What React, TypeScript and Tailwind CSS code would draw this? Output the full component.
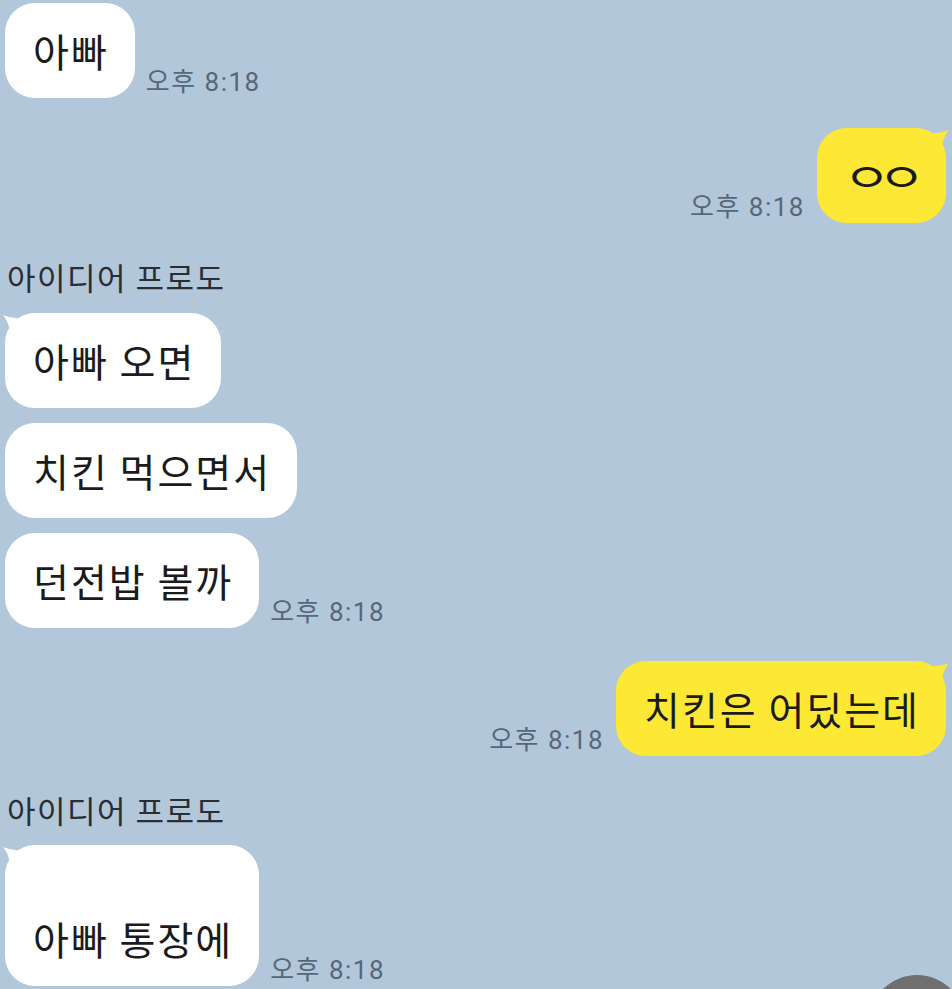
import React from 'react'

const font = { fontFamily: '"Noto Sans CJK KR", "Noto Sans", sans-serif' }

function Time() {
  return (
    <span
      className="mb-[3px] shrink-0 text-[26px] leading-none tracking-[1.5px] text-[#56677a]"
      style={{ fontFamily: 'Roboto, "Noto Sans CJK KR", sans-serif' }}
    >
      오후 8:18
    </span>
  )
}

function LeftTail() {
  return (
    <svg className="absolute -left-[3px] top-[1px] h-[22px] w-[24px]" viewBox="0 0 24 22">
      <path d="M1 1 C 6 3, 12 4, 22 5 L 22 22 L 8 22 C 8 14, 6 7, 1 1 Z" fill="#ffffff" />
    </svg>
  )
}

function RightTail() {
  return (
    <svg className="absolute -right-[4px] top-[1px] h-[22px] w-[24px]" viewBox="0 0 24 22">
      <path d="M23 1 C 18 3, 12 4, 2 5 L 2 22 L 16 22 C 16 14, 18 7, 23 1 Z" fill="#fde935" />
    </svg>
  )
}

function Left({ text, time, tail, lines = 1 }: { text: string; time?: boolean; tail?: boolean; lines?: number }) {
  return (
    <div className="flex items-end gap-[11px] pl-[5px]">
      <div className="relative">
        {tail && <LeftTail />}
        <div className="relative rounded-[30px] bg-white py-[24px] pl-[28px] pr-[26px] text-[39px] leading-[47px] tracking-[2px] text-[#1b1b1b]">
          {lines > 1 && <div className="h-[46px]" />}
          {text}
        </div>
      </div>
      {time && <Time />}
    </div>
  )
}

function Right({ children }: { children: React.ReactNode }) {
  return (
    <div className="flex items-end justify-end gap-[12px] pr-[6px]">
      <Time />
      <div className="relative">
        <RightTail />
        <div className="relative rounded-[30px] bg-[#fde935] py-[24px] pl-[28px] pr-[26px] text-[39px] leading-[47px] tracking-[2px] text-[#1b1b1b]">
          {children}
        </div>
      </div>
    </div>
  )
}

function Name() {
  return <div className="pl-[7px] text-[31px] leading-[36px] tracking-[1.5px] text-[#2a2e33]">아이디어 프로도</div>
}

export default function App() {
  return (
    <div className="relative h-[989px] w-[952px] overflow-hidden bg-[#b2c7d9]" style={font}>
      <div className="flex flex-col pt-[3px]">
        <Left text="아빠" time />
        <div className="mt-[30px]">
          <Right>
            <div className="flex h-[47px] w-[75px] items-center justify-center">
              <span className="mr-[10px] inline-block scale-x-[1.3] text-[40px] tracking-[-10px]">ㅇㅇ</span>
            </div>
          </Right>
        </div>
        <div className="mt-[36px]">
          <Name />
        </div>
        <div className="mt-[18px] flex flex-col gap-[15px]">
          <Left text="아빠 오면" tail />
          <Left text="치킨 먹으면서" />
          <Left text="던전밥 볼까" time />
        </div>
        <div className="mt-[33px]">
          <Right>치킨은 어딨는데</Right>
        </div>
        <div className="mt-[36px]">
          <Name />
        </div>
        <div className="mt-[17px]">
          <Left text="아빠 통장에" tail time lines={2} />
        </div>
      </div>
      <div className="absolute left-[869px] top-[975px] h-[96px] w-[96px] rounded-full bg-[#6f6f6f]" />
    </div>
  )
}
